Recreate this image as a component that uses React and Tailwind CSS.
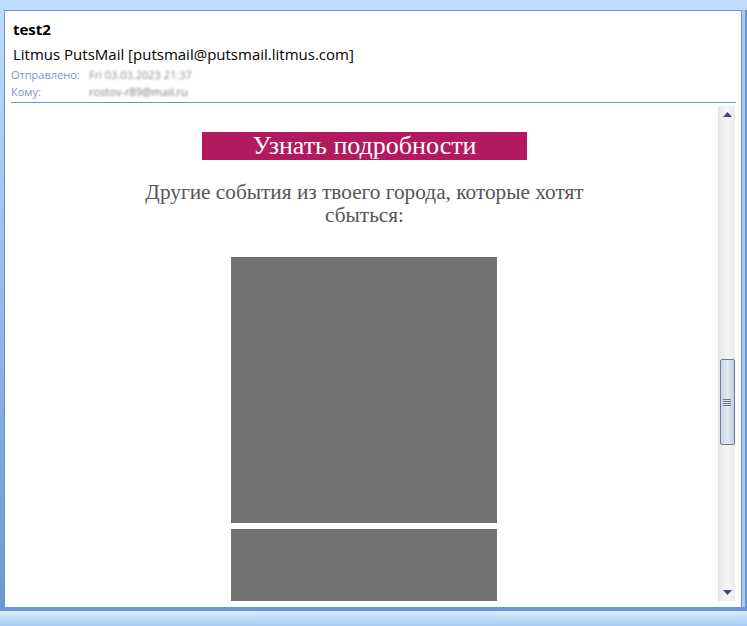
export default function App() {
  return (
    <div className="w-[747px] h-[626px] overflow-hidden flex flex-col bg-[#bfdbfd]">
      <div className="h-[10px] shrink-0 bg-[#bfdbfd]" />
      <div className="flex h-[597px] shrink-0">
        <div className="w-[4px] bg-gradient-to-b from-[#bfdbfd] to-[#6b96d1]" />
        <div className="w-[738px] bg-white border-l border-t border-r border-[#6a95d0] flex flex-col">
          {/* message header */}
          <div className="pl-[8px] pr-[5px] pt-[8px] font-['Open_Sans',sans-serif]">
            <div className="text-[15px] leading-[20px] font-bold text-black">test2</div>
            <div className="mt-[5px] text-[15px] leading-[20px] text-black">
              Litmus PutsMail [putsmail@putsmail.litmus.com]
            </div>
            <div className="mt-[2px] flex text-[11px] leading-[17px] text-[#7d93cb]">
              <span className="w-[78px] -ml-[2px]">Отправлено:</span>
              <span className="text-[#8c8c8c] blur-[1.3px]">Fri 03.03.2023 21:37</span>
            </div>
            <div className="flex text-[11px] leading-[17px] text-[#7d93cb]">
              <span className="w-[78px] -ml-[2px]">Кому:</span>
              <span className="text-[#7a7a7a] blur-[1.3px]">rostov-r89@mail.ru</span>
            </div>
          </div>
          <div className="ml-[6px] mr-[5px] mt-[2px] h-px bg-[#6a95d0]" />

          {/* body */}
          <div className="flex flex-1 min-h-0 pb-[6px]">
            <div className="ml-[6px] w-[707px] overflow-hidden flex flex-col items-center font-['Liberation_Serif',serif]">
              <div className="mt-[29px] w-[325px] h-[28px] shrink-0 bg-[#b3195d] text-white text-[26px] leading-[28px] text-center">
                Узнать подробности
              </div>
              <p className="mt-[21px] w-[470px] text-center text-[21.3px] leading-[23px] text-[#555555]">
                Другие события из твоего города, которые хотят сбыться:
              </p>
              <div className="mt-[30px] mr-[1px] w-[266px] h-[266px] shrink-0 bg-[#737270]" />
              <div className="mt-[6px] mr-[1px] w-[266px] h-[120px] shrink-0 bg-[#737270]" />
            </div>

            {/* scrollbar */}
            <div className="mt-[3px] w-[17px] flex flex-col items-center bg-gradient-to-r from-[#e8e8e8] via-[#f4f4f4] to-[#ececec] border-l border-[#e4e4e4]">
              <div className="h-[17px] w-full flex items-center justify-center">
                <svg width="9" height="5" viewBox="0 0 9 5">
                  <path d="M4.5 0 L9 5 L0 5 Z" fill="#3d4b70" />
                </svg>
              </div>
              <div className="mt-[236px] w-[15px] h-[86px] rounded-[2px] border border-[#6a7aa0] bg-gradient-to-r from-[#c9d4e4] via-[#e2e9f3] to-[#c5d0e0] flex items-center justify-center">
                <div className="flex flex-col gap-[1px]">
                  <div className="w-[8px] h-px bg-[#6b7488]" />
                  <div className="w-[8px] h-px bg-[#6b7488]" />
                  <div className="w-[8px] h-px bg-[#6b7488]" />
                  <div className="w-[8px] h-px bg-[#6b7488]" />
                </div>
              </div>
              <div className="flex-1" />
              <div className="h-[17px] w-full flex items-center justify-center">
                <svg width="9" height="5" viewBox="0 0 9 5">
                  <path d="M0 0 L9 0 L4.5 5 Z" fill="#3d4b70" />
                </svg>
              </div>
            </div>
          </div>
        </div>
        <div className="w-[3px] bg-[#a9c9f3]" />
        <div className="w-[2px] bg-[#6b96d1]" />
      </div>
      <div className="h-[4px] shrink-0 bg-[#6b96d1]" />
      <div className="h-[15px] shrink-0 bg-gradient-to-b from-[#dcebfe] to-[#a9cdf8]" />
    </div>
  );
}
